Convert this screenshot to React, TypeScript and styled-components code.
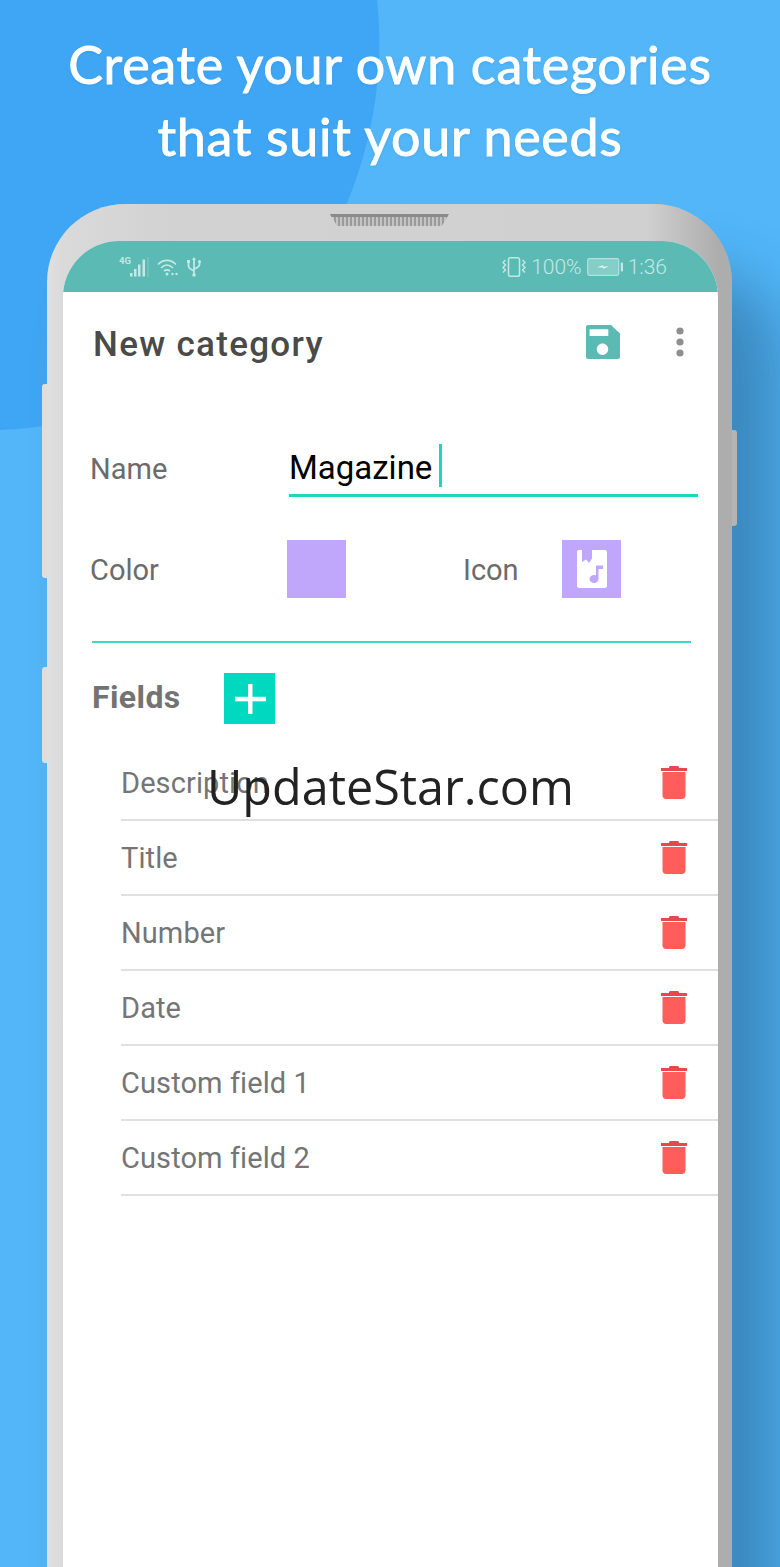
import styled, { createGlobalStyle } from 'styled-components'

const GlobalStyle = createGlobalStyle`
  html, body {
    margin: 0;
    padding: 0;
    background: #52b6f8;
  }
`

const FIELDS = ['Description', 'Title', 'Number', 'Date', 'Custom field 1', 'Custom field 2']

const SignalIcon = () => (
  <svg width="30" height="22" viewBox="0 0 30 22" fill="#c4e8e5">
    <text x="0" y="8" fontFamily="Roboto, sans-serif" fontSize="9.500" fontWeight="700">4G</text>
    <rect x="11" y="17" width="2.500" height="3.500" />
    <rect x="15" y="13" width="2.500" height="7.500" />
    <rect x="19" y="8.500" width="2.500" height="12" />
    <rect x="23.500" y="3.500" width="2.500" height="17" />
    <rect x="28.500" y="1" width="1" height="20" opacity="0.4" />
  </svg>
)

const WifiIcon = () => (
  <svg width="22" height="20" viewBox="0 0 22 20" fill="none" stroke="#c4e8e5" strokeWidth="1.600">
    <path d="M1 7.500C6 2 14 2 19 7.500" />
    <path d="M4 11C8 7 12 7 16 11" />
    <path d="M7 14C9 12.500 11 12.500 13 14" />
    <circle cx="10" cy="17" r="1.500" fill="#c4e8e5" stroke="none" />
    <circle cx="15.500" cy="17" r="1.200" fill="#c4e8e5" stroke="none" />
    <circle cx="19.500" cy="17" r="1.200" fill="#c4e8e5" stroke="none" />
  </svg>
)

const UsbIcon = () => (
  <svg width="14" height="20" viewBox="0 0 14 20" fill="none" stroke="#c4e8e5" strokeWidth="1.800">
    <path d="M7 2V18" />
    <path d="M1.500 5V9C1.500 11 3 12 7 14" />
    <path d="M12.500 5V7.500C12.500 9.500 11 10.500 7 12" />
    <path d="M7 0L9 3H5Z" fill="#c4e8e5" stroke="none" />
    <circle cx="7" cy="18" r="1.800" fill="#c4e8e5" stroke="none" />
    <rect x="0" y="3" width="3" height="3" fill="#c4e8e5" stroke="none" />
    <circle cx="12.500" cy="4.500" r="1.500" fill="#c4e8e5" stroke="none" />
  </svg>
)

const VibrateIcon = () => (
  <svg width="24" height="20" viewBox="0 0 24 20" fill="none" stroke="#c4e8e5" strokeWidth="1.500">
    <rect x="6.500" y="0.800" width="11" height="18.400" rx="1.800" />
    <path d="M3.500 3L1 5.500L3.500 8L1 10.500L3.500 13L1 15.500" strokeWidth="1.400" />
    <path d="M20.500 3L23 5.500L20.500 8L23 10.500L20.500 13L23 15.500" strokeWidth="1.400" />
  </svg>
)

const BatteryIcon = () => (
  <svg width="36" height="18" viewBox="0 0 36 18">
    <rect x="0.700" y="0.700" width="31" height="16.600" rx="1.500" fill="#86cdc8" stroke="#b4e0dd" strokeWidth="1.200" />
    <rect x="33.800" y="4.500" width="2.200" height="9" rx="0.800" fill="#c4e8e5" />
    <path d="M10 9.300L16 7.300V8.500H22L16 10.700V9.500Z" fill="#e6f6f4" />
  </svg>
)

const SaveIcon = () => (
  <svg width="34" height="34" viewBox="0 0 34 34">
    <path
      fill="#5cbab5"
      fillRule="evenodd"
      d="M2 0H25L34 8.500V32C34 33.100 33.100 34 32 34H2C0.900 34 0 33.100 0 32V2C0 0.900 0.900 0 2 0ZM3.600 4.300V11H22.300V4.300ZM16.500 18.600C13.400 18.600 10.800 21.200 10.800 24.300C10.800 27.400 13.400 30 16.500 30C19.600 30 22.200 27.400 22.200 24.300C22.200 21.200 19.600 18.600 16.500 18.600Z"
    />
  </svg>
)

const MoreIcon = () => (
  <svg width="8" height="30" viewBox="0 0 8 30" fill="#8f8f8f">
    <circle cx="4" cy="4" r="3.600" />
    <circle cx="4" cy="15" r="3.600" />
    <circle cx="4" cy="26" r="3.600" />
  </svg>
)

const MusicBookIcon = () => (
  <svg width="30" height="38" viewBox="0 0 30 38">
    <path
      fill="#ffffff"
      d="M2 0H5V12L9 9.500L12 13L15 8.500V0H28C29.100 0 30 0.900 30 2V36C30 37.100 29.100 38 28 38H2C0.900 38 0 37.100 0 36V2C0 0.900 0.900 0 2 0Z"
    />
    <path
      fill="#c1a7fb"
      d="M19 15.500H26V19H21.500V29C21.500 31.200 19.500 33 17 33C14.500 33 12.500 31.200 12.500 29C12.500 26.800 14.500 25 17 25C17.700 25 18.400 25.100 19 25.400Z"
    />
  </svg>
)

const PlusIcon = () => (
  <svg width="32" height="32" viewBox="0 0 32 32" fill="#ffffff">
    <rect x="14" y="1" width="4.500" height="30" />
    <rect x="1" y="13.800" width="31" height="4.500" />
  </svg>
)

const TrashIcon = () => (
  <svg width="26" height="33" viewBox="0 0 26 33">
    <path fill="#e8474b" d="M8 1.500C8 .7 8.700 0 9.500 0H16.500C17.300 0 18 .7 18 1.500V2H26V5H0V2H8Z" />
    <path fill="#ff5c5c" d="M1.500 6H24.500V29.500C24.500 31.400 23 33 21 33H5C3 33 1.500 31.400 1.500 29.500Z" />
  </svg>
)

export default function App() {
  return (
    <Page>
      <GlobalStyle />
      <Blob viewBox="0 0 400 440" width="400" height="440">
        <path fill="#3fa6f5" d="M0 0H377C386 80 368 155 345 208C290 335 150 425 0 430Z" />
      </Blob>

      <Headline>
        Create your own categories
        <br />
        that suit your needs
      </Headline>

      <Phone>
        <SideKey $side="left" $top={180} $height={194} />
        <SideKey $side="left" $top={463} $height={96} />
        <SideKey $side="right" $top={226} $height={96} />
        <Speaker />

        <Screen>
          <StatusBar>
            <StatusGroup>
              <SignalIcon />
              <WifiIcon />
              <UsbIcon />
            </StatusGroup>
            <StatusGroup>
              <VibrateIcon />
              <StatusText>100%</StatusText>
              <BatteryIcon />
              <StatusText>1:36</StatusText>
            </StatusGroup>
          </StatusBar>

          <Toolbar>
            <ScreenTitle>New category</ScreenTitle>
            <ToolbarActions>
              <SaveIcon />
              <MoreIcon />
            </ToolbarActions>
          </Toolbar>

          <NameRow>
            <NameLabel>Name</NameLabel>
            <NameField>
              Magazine
              <Caret />
            </NameField>
          </NameRow>

          <PickerRow>
            <PickerLabel>Color</PickerLabel>
            <Swatch />
            <IconLabel>Icon</IconLabel>
            <Swatch>
              <MusicBookIcon />
            </Swatch>
          </PickerRow>

          <Rule />

          <FieldsHeader>
            <FieldsTitle>Fields</FieldsTitle>
            <AddButton>
              <PlusIcon />
            </AddButton>
          </FieldsHeader>

          <FieldList>
            {FIELDS.map((field) => (
              <FieldRow key={field}>
                <FieldName>{field}</FieldName>
                <TrashIcon />
              </FieldRow>
            ))}
          </FieldList>
        </Screen>
      </Phone>

      <Watermark>UpdateStar.com</Watermark>
    </Page>
  )
}

const Page = styled.div`
  position: relative;
  width: 780px;
  height: 1567px;
  overflow: hidden;
  background: #52b6f8;
  font-family: Roboto, sans-serif;
`

const Blob = styled.svg`
  position: absolute;
  top: 0;
  left: 0;
`

const Headline = styled.h1`
  position: relative;
  box-sizing: border-box;
  height: 204px;
  margin: 0;
  padding-top: 28px;
  text-align: center;
  color: #ffffff;
  font-family: Lato, sans-serif;
  font-size: 52px;
  font-weight: 400;
  letter-spacing: 0.7px;
  line-height: 72px;
  -webkit-text-stroke: 0.9px #ffffff;
  text-shadow: 0 1px 3px rgba(0, 60, 120, 0.15);
`

const Phone = styled.div`
  position: relative;
  box-sizing: border-box;
  width: 685px;
  height: 1500px;
  margin-left: 47px;
  padding: 37px 14px 0 16px;
  border-radius: 78px 78px 0 0;
  background: linear-gradient(90deg, #e0e0e0 0, #dadada 16px, #d2d2d2 120px, #d0d0d0 600px, #adadad 671px, #adadad 685px);
  box-shadow: 48px 70px 60px rgba(15, 50, 80, 0.34);
`

const SideKey = styled.div<{ $side: 'left' | 'right'; $top: number; $height: number }>`
  position: absolute;
  top: ${(p) => p.$top}px;
  ${(p) => (p.$side === 'left' ? 'left: -5px;' : 'right: -5px;')}
  width: 5px;
  height: ${(p) => p.$height}px;
  border-radius: ${(p) => (p.$side === 'left' ? '3px 0 0 3px' : '0 3px 3px 0')};
  background: ${(p) => (p.$side === 'left' ? '#dedede' : '#b4b4b4')};
`

const Speaker = styled.div`
  position: absolute;
  top: 10px;
  left: 283px;
  width: 119px;
  height: 12px;
  clip-path: polygon(0 0, 100% 0, 94% 100%, 6% 100%);
  background:
    linear-gradient(#8a8a8a, #8a8a8a) 0 0 / 100% 3px no-repeat,
    repeating-linear-gradient(90deg, #9a9a9a 0, #9a9a9a 2px, #c4c4c4 2px, #c4c4c4 4px);
`

const Screen = styled.div`
  height: 100%;
  border-radius: 56px 56px 0 0;
  overflow: hidden;
  background: #ffffff;
`

const StatusBar = styled.div`
  display: flex;
  align-items: center;
  justify-content: space-between;
  box-sizing: border-box;
  height: 51px;
  padding: 0 51px 0 56px;
  background: #5cbab5;
`

const StatusGroup = styled.div`
  display: flex;
  align-items: center;
  gap: 8px;

  &:last-child {
    gap: 5px;
  }
`

const StatusText = styled.span`
  color: #c4e8e5;
  font-size: 21px;
  font-weight: 300;
`

const Toolbar = styled.div`
  display: flex;
  align-items: center;
  justify-content: space-between;
  box-sizing: border-box;
  height: 104px;
  padding: 0 34px 0 30px;
`

const ScreenTitle = styled.div`
  color: #4a4a4a;
  font-size: 35px;
  font-weight: 500;
  letter-spacing: 1.3px;
`

const ToolbarActions = styled.div`
  display: flex;
  align-items: center;
  gap: 56px;
  margin-top: -4px;
`

const FormLabel = styled.div`
  color: #6b6b6b;
  font-size: 29px;
`

const NameLabel = styled(FormLabel)`
  width: 199px;
`

const NameRow = styled.div`
  display: flex;
  align-items: center;
  height: 57px;
  margin: 44px 20px 0 27px;
`

const NameField = styled.div`
  display: flex;
  flex: 1;
  align-items: center;
  box-sizing: border-box;
  height: 57px;
  border-bottom: 3px solid #1dd6c0;
  color: #000000;
  font-size: 33px;
`

const Caret = styled.span`
  width: 3px;
  height: 43px;
  margin: -4px 0 0 7px;
  background: #1dd6c0;
`

const PickerRow = styled.div`
  display: flex;
  align-items: center;
  height: 58px;
  margin: 43px 0 0 27px;
`

const PickerLabel = styled(FormLabel)`
  width: 197px;
  padding-top: 2px;
`

const IconLabel = styled(FormLabel)`
  width: 99px;
  margin-left: 117px;
  padding-top: 2px;
`

const Swatch = styled.div`
  display: flex;
  align-items: center;
  justify-content: center;
  width: 59px;
  height: 58px;
  background: #c1a7fb;
`

const Rule = styled.div`
  height: 2px;
  margin: 43px 27px 0 29px;
  background: #3fd8c6;
`

const FieldsHeader = styled.div`
  display: flex;
  align-items: center;
  height: 51px;
  margin: 30px 0 0 29px;
`

const FieldsTitle = styled.div`
  width: 132px;
  padding-bottom: 4px;
  color: #737373;
  font-size: 32px;
  font-weight: 700;
  letter-spacing: 0.4px;
`

const AddButton = styled.div`
  display: flex;
  align-items: center;
  justify-content: center;
  width: 51px;
  height: 51px;
  background: #00d9c0;
`

const FieldList = styled.div`
  margin: 22px 0 0 58px;
`

const FieldRow = styled.div`
  display: flex;
  align-items: center;
  justify-content: space-between;
  box-sizing: border-box;
  height: 75px;
  padding: 0 31px 0 0;
  border-bottom: 2px solid #e0e0e0;
`

const FieldName = styled.div`
  color: #757575;
  font-size: 29px;
  letter-spacing: 0.1px;
`

const Watermark = styled.div`
  position: absolute;
  top: 753px;
  left: 207px;
  color: #222222;
  font-family: 'Open Sans', sans-serif;
  font-size: 48.500px;
  line-height: 66px;
`
